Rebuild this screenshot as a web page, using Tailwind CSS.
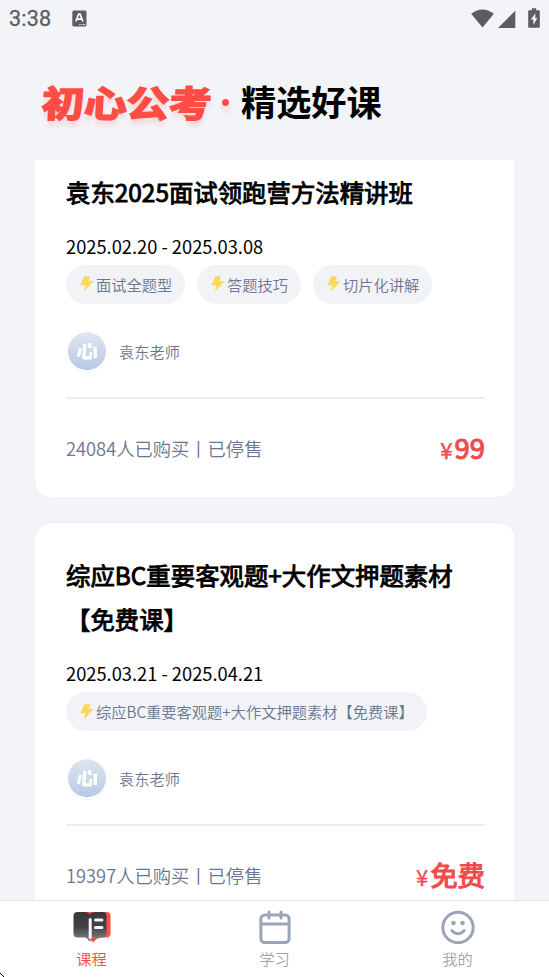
<!DOCTYPE html>
<html lang="zh-CN">
<head>
<meta charset="utf-8">
<title>初心公考</title>
<script src="https://cdn.jsdelivr.net/npm/@tailwindcss/browser@4"></script>
</head>
<body class="bg-[#f3f4f8] font-['Noto_Sans_CJK_SC',sans-serif] text-black">
<svg class="absolute size-0">
  <defs>
    <linearGradient id="av" x1="0" y1="0" x2="0" y2="1"><stop offset="0" stop-color="#dfe5f1"/><stop offset="1" stop-color="#b8c8e5"/></linearGradient>
    <linearGradient id="bk" x1="0" y1="0" x2="0" y2="1"><stop offset="0" stop-color="#38383b"/><stop offset=".5" stop-color="#424244"/><stop offset="1" stop-color="#8a8a8c"/></linearGradient>
    <symbol id="bolt" viewBox="0 0 14 16"><path d="M4.400.3H10.300L8.500 4.900H13.700L4 15.500 5.600 9.200H.3Z" fill="#f9d957"/></symbol>
    <symbol id="avatar" viewBox="0 0 42 42">
      <circle cx="21" cy="21.6" r="20.3" fill="#f2f3f6"/><circle cx="21" cy="21" r="20" fill="#fff"/><circle cx="21" cy="20.3" r="19" fill="url(#av)"/>
      <path d="M12.800 17h3l-1.600 8.800h-3.400ZM17 12.800h3.300v4l-.7 8.500h3.600l.3-4.500h2.700l-.6 7.700h-8l-1.500-1.500ZM21.700 12h3.200l1.300 5h-3.700ZM27.500 15.700h3.400v11.200h-3.400Z" fill="#fff"/>
    </symbol>
  </defs>
</svg>
<div class="flex h-[977px] w-[549px] flex-col overflow-hidden">
  <header class="h-[160px] shrink-0">
    <div class="flex h-[37px] items-center pl-[9px] pr-[9px] text-[#5c5d60]">
      <span class="font-[Roboto,sans-serif] text-[21.5px] leading-none tracking-[0.2px] [-webkit-text-stroke:0.3px_#5c5d60]">3:38</span>
      <svg class="ml-[21px] h-[17px] w-[15px]" viewBox="0 0 15 17"><rect x=".3" y=".5" width="14.2" height="16" rx="1.5" fill="#5c5d60"/><path d="M3.800 11.500 6.700 4h1.300l2.900 7.500M5 9.200h4.600" fill="none" stroke="#fff" stroke-width="1.7"/><path d="M7.300 14.600h1.100m.9 0h1.100m.9 0h1.800" stroke="#fff" stroke-width="1"/></svg>
      <svg class="ml-auto h-[19px] w-[23px]" viewBox="0 0 23 19"><path d="M.2 4.800Q11.500-3.800 22.900 4.800L11.500 18.600Z" fill="#5c5d60"/></svg>
      <svg class="ml-[4px] h-[18px] w-[18px]" viewBox="0 0 18 18"><path d="M17.300.8V18H0Z" fill="#5c5d60"/></svg>
      <svg class="ml-[12px] h-[20px] w-[12px] -translate-y-px" viewBox="0 0 12 20"><path d="M3.800.3h4.400v2h2.600q1 0 1 1v15.500q0 1-1 1H1.200q-1 0-1-1V3.300q0-1 1-1h2.600Z" fill="#5c5d60"/><path d="M7.400 5.300 2.800 11.600h2.600v5.400L9.300 10H7.200Z" fill="#f3f4f8"/></svg>
    </div>
    <h1 class="flex h-[130px] items-center pl-[42px]">
      <span class="block w-[174px] whitespace-nowrap pb-[3px] text-[36px] font-bold leading-none text-[#ff4d45] [-webkit-text-stroke:1.8px_#ff4d45] [text-shadow:0_6px_5px_#ff4d4530]"><span class="inline-block origin-left [transform:skewX(-3deg)_scaleX(1.18)]">初心公考</span></span>
      <span class="ml-[6px] mr-[12px] size-[7px] rounded-full bg-[#ff4d45] shadow-[0_6px_6px_#ff4d4533]"></span>
      <span class="-translate-y-px whitespace-nowrap text-[35.2px] font-bold leading-none">精选好课</span>
    </h1>
  </header>
  <main class="flex h-[740px] shrink-0 flex-col gap-[24px] overflow-hidden px-[34px]">
    <article class="-mt-[21px] h-[359px] w-[482px] shrink-0 rounded-[18px] border border-[#f0f1f2] bg-white px-[31px] pt-[30px]">
      <h2 class="whitespace-nowrap text-[24.4px] font-normal leading-[43.5px] [-webkit-text-stroke:0.9px_black]">袁东2025面试领跑营方法精讲班</h2>
      <p class="mt-[18px] h-[33px] text-[18.3px] leading-[28px]">2025.02.20 - 2025.03.08</p>
      <div class="flex gap-[12px] text-[15.25px] font-[350] leading-[39px] text-[#6a7690]">
        <span class="flex h-[39px] w-[119px] items-center rounded-full bg-[#f2f3f7] pl-[14px] whitespace-nowrap"><svg class="mr-[2px] h-[16px] w-[14px]"><use href="#bolt"/></svg>面试全题型</span>
        <span class="flex h-[39px] w-[104px] items-center rounded-full bg-[#f2f3f7] pl-[14px] whitespace-nowrap"><svg class="mr-[2px] h-[16px] w-[14px]"><use href="#bolt"/></svg>答题技巧</span>
        <span class="flex h-[39px] w-[119px] items-center rounded-full bg-[#f2f3f7] pl-[14px] whitespace-nowrap"><svg class="mr-[2px] h-[16px] w-[14px]"><use href="#bolt"/></svg>切片化讲解</span>
      </div>
      <div class="mt-[27px] flex h-[42px] items-center text-[15.25px] font-[350] text-[#6a7690]"><svg class="mr-[11px] size-[42px]"><use href="#avatar"/></svg>袁东老师</div>
      <div class="mt-[24px] h-[2px] w-[419px] bg-[#ececec]"></div>
      <div class="flex h-[100px] w-[419px] items-center text-[18.3px] font-[350] text-[#6a7690]">
        <span>24084人已购买丨已停售</span>
        <span class="ml-auto flex items-baseline font-normal leading-none text-[#f04c4c] -translate-y-px"><span class="mr-[2px] text-[22px] [-webkit-text-stroke:0.5px_#f04c4c]">¥</span><span class="text-[27.45px] [-webkit-text-stroke:1.1px_#f04c4c]">99</span></span>
      </div>
    </article>
    <article class="h-[420px] w-[482px] shrink-0 rounded-[18px] border border-[#f0f1f2] bg-white px-[31px] pt-[30px]">
      <h2 class="whitespace-nowrap text-[24.4px] font-normal leading-[43.5px] [-webkit-text-stroke:0.9px_black]">综应BC重要客观题+大作文押题素材<br>【免费课】</h2>
      <p class="mt-[19px] h-[33px] text-[18.3px] leading-[28px]">2025.03.21 - 2025.04.21</p>
      <div class="flex text-[15.25px] font-[350] leading-[39px] text-[#6a7690]">
        <span class="flex h-[39px] w-[361px] items-center rounded-full bg-[#f2f3f7] pl-[14px] whitespace-nowrap"><svg class="mr-[2px] h-[16px] w-[14px] shrink-0"><use href="#bolt"/></svg>综应BC重要客观题+大作文押题素材【免费课】</span>
      </div>
      <div class="mt-[27px] flex h-[42px] items-center text-[15.25px] font-[350] text-[#6a7690]"><svg class="mr-[11px] size-[42px]"><use href="#avatar"/></svg><span class="pb-px">袁东老师</span></div>
      <div class="mt-[24px] h-[2px] w-[419px] bg-[#ececec]"></div>
      <div class="flex h-[100px] w-[419px] items-center text-[18.3px] font-[350] text-[#6a7690]">
        <span>19397人已购买丨已停售</span>
        <span class="ml-auto flex items-baseline font-normal leading-none text-[#f04c4c] -translate-y-px"><span class="mr-[2px] text-[22px] [-webkit-text-stroke:0.3px_#f04c4c]">¥</span><span class="text-[27.45px] [-webkit-text-stroke:1.1px_#f04c4c]">免费</span></span>
      </div>
    </article>
  </main>
  <nav class="relative grid h-[77px] shrink-0 grid-cols-3 border-t border-[#e3e4e8] bg-white text-[15.25px] font-[350] leading-[22px] text-[#9aa5b8]">
    <a class="flex flex-col items-center pt-[9px] text-[#ff4d45]">
      <svg class="mb-[3px] h-[34px] w-[38px]" viewBox="0 0 38 34"><path d="M12 2h21.500Q37.500 2 37.500 6v17.500q0 4-4 4H29q-5 0-9 5l-3-3Z" fill="#ff4d45"/><path d="M4.500 2h8q2.500 0 4 2.500Q18.500 2 22 2h7.500q4 0 4 4v17.500q0 4-4 4h-8.500q-2 0-4.500 4.500-2.500-4.500-4.500-4.500H4.500q-4 0-4-4V6q0-4 4-4Z" fill="url(#bk)"/><path d="M17.200 9.500v18" stroke="#faf5ff" stroke-width="3" stroke-linecap="round"/><path d="M22.500 10h6.500m-6.500 7.500h6.500" stroke="#faf5ff" stroke-width="3" stroke-linecap="round"/></svg>
      <span>课程</span>
    </a>
    <a class="flex flex-col items-center pt-[9px]">
      <svg class="mb-[3px] h-[34px] w-[32px]" viewBox="0 0 32 34" fill="none" stroke="#9aa5b8" stroke-width="3" stroke-linecap="round"><rect x="1.900" y="4.900" width="28.200" height="27.600" rx="4"/><path d="M2 14h28M10 2v6M22 2v6"/></svg>
      <span>学习</span>
    </a>
    <a class="flex flex-col items-center pt-[9px]">
      <svg class="mb-[3px] h-[34px] w-[34px]" viewBox="0 0 34 34" fill="none" stroke="#9aa5b8" stroke-width="3" stroke-linecap="round"><circle cx="17" cy="17.500" r="15.200"/><path d="M10.800 20.500q6.200 6.500 12.400 0"/><circle cx="12.500" cy="13" r="2.300" fill="#9aa5b8" stroke="none"/><circle cx="21.500" cy="13" r="2.300" fill="#9aa5b8" stroke="none"/></svg>
      <span>我的</span>
    </a>
    <svg class="absolute bottom-0 left-0 h-[4px] w-[4px]" viewBox="0 0 4 4" shape-rendering="crispEdges"><path d="M0 0h1v1H0ZM1 1h1v1H1ZM2 2h1v1H2ZM3 3h1v1H3Z"/></svg>
  </nav>
</div>
</body>
</html>
